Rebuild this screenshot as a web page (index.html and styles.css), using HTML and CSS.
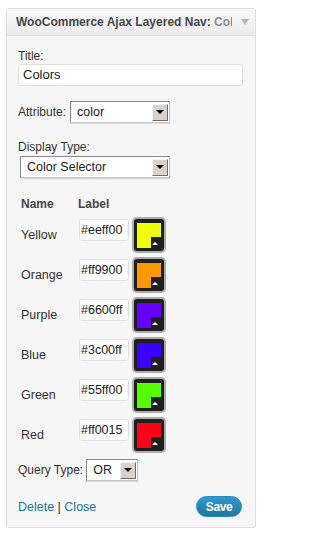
FILE: index.html
```html
<!DOCTYPE html>
<html>
<head>
<meta charset="utf-8">
<link rel="stylesheet" href="styles.css">
</head>
<body>
<div class="widget">
  <div class="widget-top">
    <div class="widget-title">WooCommerce Ajax Layered Nav: <span class="in-title">Colors</span></div>
    <div class="toggle"><span class="tri"></span></div>
  </div>
  <div class="widget-inside">
    <div class="field-label">Title:</div>
    <div class="text-input wide">Colors</div>

    <div class="inline-row attr-row">
      <span class="inline-label">Attribute:</span>
      <div class="select sel-attr"><span class="sel-text">color</span><span class="sel-btn"><span class="sel-arrow"></span></span></div>
    </div>

    <div class="field-label dt-label">Display Type:</div>
    <div class="select sel-display"><span class="sel-text">Color Selector</span><span class="sel-btn"><span class="sel-arrow"></span></span></div>

    <div class="color-table">
      <div class="ct-head">
        <span class="col-name">Name</span>
        <span class="col-label">Label</span>
      </div>
      <div class="ct-row">
        <span class="col-name">Yellow</span>
        <div class="hex-input">#eeff00</div>
        <div class="swatch"><div class="fill" style="background:#eeff00"></div><span class="up"></span></div>
      </div>
      <div class="ct-row">
        <span class="col-name">Orange</span>
        <div class="hex-input">#ff9900</div>
        <div class="swatch"><div class="fill" style="background:#ff9900"></div><span class="up"></span></div>
      </div>
      <div class="ct-row">
        <span class="col-name">Purple</span>
        <div class="hex-input">#6600ff</div>
        <div class="swatch"><div class="fill" style="background:#6600ff"></div><span class="up"></span></div>
      </div>
      <div class="ct-row">
        <span class="col-name">Blue</span>
        <div class="hex-input">#3c00ff</div>
        <div class="swatch"><div class="fill" style="background:#3c00ff"></div><span class="up"></span></div>
      </div>
      <div class="ct-row">
        <span class="col-name">Green</span>
        <div class="hex-input">#55ff00</div>
        <div class="swatch"><div class="fill" style="background:#55ff00"></div><span class="up"></span></div>
      </div>
      <div class="ct-row">
        <span class="col-name">Red</span>
        <div class="hex-input">#ff0015</div>
        <div class="swatch"><div class="fill" style="background:#ff0015"></div><span class="up"></span></div>
      </div>
    </div>

    <div class="inline-row query-row">
      <span class="inline-label">Query Type:</span>
      <div class="select sel-query"><span class="sel-text">OR</span><span class="sel-btn"><span class="sel-arrow"></span></span></div>
    </div>

    <div class="footer">
      <div class="links"><a href="#">Delete</a> | <a href="#">Close</a></div>
      <button class="save">Save</button>
    </div>
  </div>
</div>
</body>
</html>
```
FILE: styles.css
```css
* { box-sizing: border-box; }
body {
  margin: 0;
  background: #ffffff;
  font-family: "Liberation Sans", Arial, sans-serif;
  font-size: 12px;
  color: #333333;
}
.widget {
  margin: 8px 0 0 6px;
  width: 250px;
  border: 1px solid #dfdfdf;
  border-radius: 3px;
  background: #f6f6f6;
  overflow: hidden;
}
.widget-top {
  display: flex;
  align-items: center;
  height: 27px;
  background: linear-gradient(#f9f9f9, #ececec);
  border-bottom: 1px solid #dfdfdf;
  padding-left: 9px;
}
.widget-title {
  width: 216px;
  overflow: hidden;
  white-space: nowrap;
  font-weight: bold;
  font-size: 12px;
  color: #464646;
}
.in-title { color: #8c8c8c; }
.toggle {
  flex: 1;
  display: flex;
  justify-content: center;
  align-items: center;
  padding-left: 2px;
}
.tri {
  display: block;
  width: 0; height: 0;
  border-left: 4px solid transparent;
  border-right: 4px solid transparent;
  border-top: 6px solid #b4b4b4;
}
.widget-inside {
  padding: 13px 12px 10px 11px;
}
.field-label { line-height: 15px; }
.text-input {
  height: 22px;
  line-height: 20px;
  background: #ffffff;
  border: 1px solid #dfdfdf;
  border-radius: 3px;
  padding-left: 4px;
  font-size: 13px;
  color: #222;
}
.wide { width: 225px; }
.inline-row { display: flex; align-items: center; }
.attr-row { margin-top: 15px; }
.inline-label { margin-right: 4px; }
.select {
  display: flex;
  align-items: center;
  height: 22px;
  background: #ffffff;
  border: 1px solid #8a8a8a;
  border-right-color: #c8c8c8;
  border-bottom-color: #c8c8c8;
  box-shadow: 0 1px 1px rgba(0,0,0,0.12);
  padding: 0 1px 0 6px;
}
.sel-text { flex: 1; font-size: 12.5px; color: #222; }
.sel-btn {
  width: 16px;
  height: 17px;
  background: #d6d3ce;
  border: 1px solid;
  border-color: #f4f4f4 #6d6d6d #6d6d6d #f4f4f4;
  display: flex;
  align-items: center;
  justify-content: center;
}
.sel-arrow {
  width: 0; height: 0;
  border-left: 4px solid transparent;
  border-right: 4px solid transparent;
  border-top: 4px solid #000000;
}
.sel-attr { width: 100px; }
.dt-label { margin-top: 16px; line-height: 16px; }
.sel-display { width: 150px; margin-left: 2px; margin-top: 1px; }
.color-table { margin-top: 18px; }
.ct-head {
  display: flex;
  font-weight: bold;
  line-height: 16px;
  color: #464646;
}
.col-name { width: 60px; padding-left: 3px; }
.ct-head .col-label { padding-left: 0; }
.ct-row {
  display: flex;
  align-items: center;
  height: 40px;
}
.ct-head + .ct-row { margin-top: 3px; }
.ct-row .col-name { width: 61px; font-size: 12.5px; }
.hex-input {
  align-self: flex-start;
  margin-top: 4px;
  width: 50px;
  height: 22px;
  line-height: 20px;
  background: #ffffff;
  border: 1px solid #e2e2e2;
  border-radius: 3px;
  padding-left: 1px;
  font-size: 12.5px;
  color: #222;
}
.swatch {
  position: relative;
  margin-left: 3px;
  width: 34px;
  height: 36px;
  border: 2px solid #ababab;
  border-radius: 5px;
  background: #1e1e1e;
  padding: 4px 3px 3px 3px;
}
.fill {
  width: 24px;
  height: 25px;
  clip-path: polygon(0 0, 100% 0, 100% 14px, 14px 14px, 14px 100%, 0 100%);
}
.up {
  position: absolute;
  right: 6px;
  bottom: 6px;
  width: 0; height: 0;
  border-left: 3px solid transparent;
  border-right: 3px solid transparent;
  border-bottom: 3px solid #ffffff;
}
.query-row { margin-top: 4px; }
.query-row .inline-label { margin-right: 3px; }
.sel-query { width: 52px; }
.footer {
  display: flex;
  justify-content: space-between;
  align-items: center;
  margin-top: 15px;
  padding-right: 1px;
}
.links { font-size: 12.5px; color: #333; }
.links a { color: #21759b; text-decoration: none; }
.save {
  width: 46px;
  height: 21px;
  border-radius: 11px;
  border: 1px solid #298cba;
  background: linear-gradient(#2e9ad0, #21759b);
  color: #ffffff;
  font-family: "Liberation Sans", Arial, sans-serif;
  font-weight: bold;
  font-size: 12px;
  letter-spacing: -0.4px;
  padding: 0;
}
```
